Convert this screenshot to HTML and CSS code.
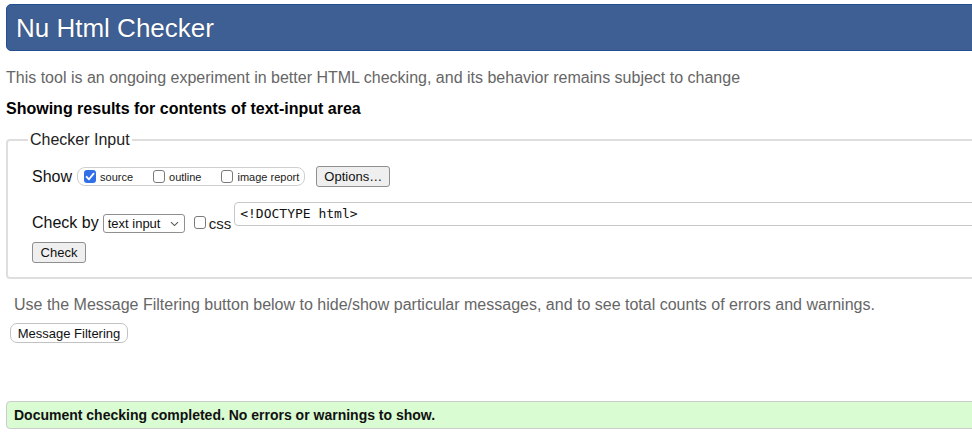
FILE: index.html
```html
<!DOCTYPE html>
<html lang="en">
<head>
<meta charset="utf-8">
<title>Nu Html Checker</title>
<link rel="stylesheet" href="styles.css">
</head>
<body>
<div class="page">
  <header class="banner"><h1 class="title">Nu Html Checker</h1></header>
  <p class="intro">This tool is an ongoing experiment in better HTML checking, and its behavior remains subject to change</p>
  <p class="showing">Showing results for contents of text-input area</p>

  <fieldset class="checker">
    <legend class="legend">Checker Input</legend>
    <div class="row row-show">
      <span class="label">Show</span>
      <span class="pill">
        <label class="opt"><span class="cb cb-on"><svg viewBox="0 0 12 13" width="12" height="13"><path d="M2.6 6.8 L5 9.3 L9.6 3.6" fill="none" stroke="#fff" stroke-width="1.8" stroke-linecap="round" stroke-linejoin="round"/></svg></span><span class="opt-text">source</span></label>
        <label class="opt"><span class="cb"></span><span class="opt-text">outline</span></label>
        <label class="opt opt-last"><span class="cb"></span><span class="opt-text">image report</span></label>
      </span>
      <button class="btn btn-options" type="button">Options…</button>
    </div>
    <div class="row row-by">
      <span class="label label-by">Check by</span>
      <span class="select-wrap">
        <select class="select"><option>text input</option></select>
        <svg class="chev" viewBox="0 0 9 6" width="9" height="6"><path d="M1 1.2 L4.5 4.6 L8 1.2" fill="none" stroke="#555" stroke-width="1.1"/></svg>
      </span>
      <span class="cb cb-css"></span>
      <span class="css-text">css</span>
      <textarea class="source" rows="1">&lt;!DOCTYPE html&gt;</textarea>
    </div>
    <div class="row row-check">
      <button class="btn btn-check" type="button">Check</button>
    </div>
  </fieldset>

  <p class="filter-note">Use the Message Filtering button below to hide/show particular messages, and to see total counts of errors and warnings.</p>
  <button class="btn-filter" type="button">Message Filtering</button>

  <div class="success">Document checking completed. No errors or warnings to show.</div>
</div>
</body>
</html>
```

FILE: styles.css
```css
html, body {
  margin: 0;
  padding: 0;
  overflow: hidden;
  background: #fff;
}

body {
  font-family: "Liberation Sans", Arial, sans-serif;
  color: #000;
}

.page {
  width: 1020px;
  padding: 4px 0 0 6px;
}

.banner {
  height: 45px;
  background: #3e5f94;
  border: 1px solid #234f91;
  border-radius: 5px;
  display: flex;
  align-items: center;
}

.title {
  margin: 0 0 0 9px;
  font-size: 26px;
  font-weight: normal;
  color: #fff;
  line-height: 30px;
  text-shadow: 0 0 1px rgba(0, 0, 0, 0.35);
}

.intro {
  margin: 17px 0 0 0;
  font-size: 16px;
  line-height: 20px;
  color: #666;
}

.showing {
  margin: 11px 0 0 0;
  font-size: 16px;
  line-height: 20px;
  font-weight: bold;
  color: #000;
}

.checker {
  margin: 12px 0 0 0;
  padding: 17px 20px 14px 24px;
  border: 2px solid #dedede;
  border-radius: 4px;
  min-width: 0;
}

.legend {
  margin-left: -4px;
  padding: 0 2px;
  font-size: 16px;
  line-height: 18px;
  color: #222;
}

.row {
  display: flex;
}

.row-show {
  align-items: center;
  height: 21px;
}

.label {
  font-size: 16px;
  line-height: 18px;
  color: #111;
}

.pill {
  display: flex;
  align-items: center;
  height: 17px;
  margin-left: 5px;
  padding: 0 5px 0 6px;
  border: 1px solid #cfcfcf;
  border-radius: 8px;
}

.opt {
  display: flex;
  align-items: center;
  margin-right: 20px;
}

.opt-last {
  margin-right: 0;
}

.opt-text {
  margin-left: 4px;
  font-size: 11px;
  line-height: 13px;
  color: #222;
  padding-top: 2px;
}

.cb {
  display: inline-block;
  box-sizing: border-box;
  width: 12px;
  height: 13px;
  border: 1px solid #7a7a7a;
  border-radius: 3px;
  background: #fff;
  flex: none;
}

.cb-on {
  border: none;
  background: #2f6fe8;
}

.cb-on svg {
  display: block;
}

.btn {
  box-sizing: border-box;
  font-family: "Liberation Sans", Arial, sans-serif;
  font-size: 13px;
  color: #111;
  background: #efefef;
  border: 1px solid #8f8f8f;
  border-radius: 3px;
  padding: 0;
  height: 21px;
}

.btn-options {
  width: 74px;
  margin-left: 11px;
}

.row-by {
  align-items: flex-start;
  margin-top: 15px;
}

.label-by {
  margin-top: 12px;
}

.select-wrap {
  position: relative;
  margin: 12px 0 0 4px;
  height: 19px;
}

.select {
  appearance: none;
  -webkit-appearance: none;
  box-sizing: border-box;
  width: 82px;
  height: 19px;
  padding: 0 0 0 4px;
  margin: 0;
  font-family: "Liberation Sans", Arial, sans-serif;
  font-size: 13px;
  color: #111;
  background: #fff;
  border: 1px solid #8f8f8f;
  border-radius: 3px;
}

.chev {
  position: absolute;
  right: 6px;
  top: 7px;
  pointer-events: none;
}

.cb-css {
  margin: 14px 0 0 9px;
}

.css-text {
  margin: 13px 0 0 3px;
  font-size: 15px;
  line-height: 18px;
  color: #222;
}

.source {
  box-sizing: border-box;
  flex: 1;
  height: 24px;
  margin: 0 0 0 3px;
  padding: 3px 5px;
  font-family: "DejaVu Sans Mono", "Liberation Mono", monospace;
  font-size: 13px;
  line-height: 16px;
  color: #111;
  border: 1px solid #c8c8c8;
  border-radius: 4px;
  resize: none;
  overflow: hidden;
}

.row-check {
  margin-top: 9px;
}

.btn-check {
  width: 54px;
}

.filter-note {
  margin: 16px 0 0 8px;
  font-size: 16px;
  line-height: 20px;
  color: #666;
}

.btn-filter {
  display: block;
  box-sizing: border-box;
  margin: 8px 0 0 4px;
  height: 20px;
  width: 118px;
  padding: 0;
  font-family: "Liberation Sans", Arial, sans-serif;
  font-size: 13px;
  color: #111;
  background: #fff;
  border: 1px solid #c2c2c2;
  border-radius: 7px;
}

.success {
  box-sizing: border-box;
  margin-top: 58px;
  height: 28px;
  padding: 0 0 0 7px;
  display: flex;
  align-items: center;
  font-size: 14px;
  font-weight: bold;
  color: #111;
  background: #d9fcd2;
  border: 1px solid #cccccc;
  border-radius: 4px;
}
```
